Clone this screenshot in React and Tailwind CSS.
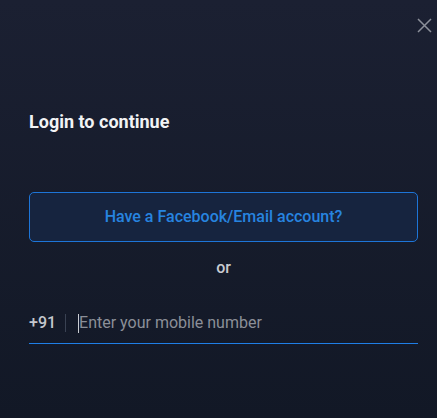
import React from 'react';

export default function App() {
    return (
        <div
            className="w-[437px] h-[418px] bg-gradient-to-b from-[#1b2032] to-[#121826] text-white flex flex-col px-[29px] pr-[19px]"
            style={{ fontFamily: 'Roboto, "Liberation Sans", sans-serif' }}
        >
            <div className="flex justify-end pt-[18px] -mr-[14px]">
                <button className="text-[#8c909a]">
                    <svg width="15" height="15" viewBox="0 0 15 15" fill="none" stroke="currentColor" strokeWidth="1.5">
                        <path d="M1 1L14 14M14 1L1 14" />
                    </svg>
                </button>
            </div>
            <h2 className="mt-[78px] text-[18px] font-bold leading-[22px] text-[#f2f3f5]">Login to continue</h2>
            <button className="mt-[59px] h-[50px] w-full rounded-[5px] border border-[#1d75d8] bg-[#16243f] text-[16px] font-medium text-[#2784e0]">
                Have a Facebook/Email account?
            </button>
            <div className="mt-[16px] text-center text-[16px] font-medium leading-[20px] text-[#c8cbd1]">or</div>
            <div className="mt-[35px]">
                <div className="flex items-center h-[30px] pb-[10px]">
                    <span className="text-[16px] font-medium text-[#c4c7cd]">+91</span>
                    <span className="ml-[9px] mr-[12px] h-[18px] w-px bg-[#3a4253]" />
                    <span className="h-[19px] w-px bg-[#c9ccd2]" />
                    <input
                        className="flex-1 bg-transparent text-[16px] outline-none placeholder:text-[#8b8f98]"
                        placeholder="Enter your mobile number"
                    />
                </div>
                <div className="h-px bg-[#1f7ee6]" />
            </div>
        </div>
    );
}
